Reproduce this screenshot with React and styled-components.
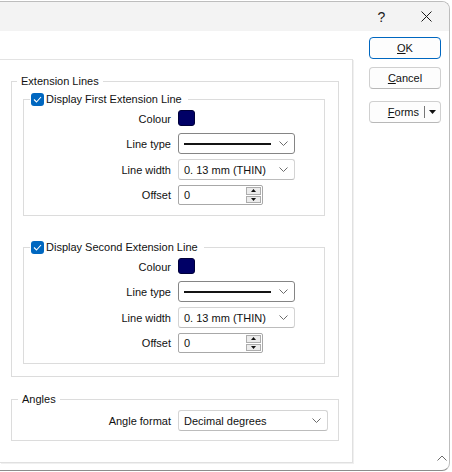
import React from 'react'
import styled, { createGlobalStyle } from 'styled-components'

const GlobalStyle = createGlobalStyle`
  html, body {
    margin: 0;
    padding: 0;
    background: #fff;
  }
  body {
    font-family: "Liberation Sans", Arial, sans-serif;
    font-size: 11px;
    color: #111;
    overflow: hidden;
  }
  * { box-sizing: border-box; }
`

const Window = styled.div`
  width: 450px;
  height: 470px;
  margin-top: 1px;
  border: 1px solid #bdbdbd;
  border-left: none;
  border-bottom-color: #8c8c8c;
  border-radius: 0 8px 8px 0;
  background: #fff;
  display: flex;
  flex-direction: column;
  overflow: hidden;
`

const TitleBar = styled.div`
  height: 29px;
  flex: none;
  background: #f3f3f3;
  display: flex;
  justify-content: flex-end;
`

const CaptionButton = styled.div`
  width: 45px;
  display: flex;
  align-items: center;
  justify-content: center;
  font-size: 14px;
  color: #1a1a1a;
`

const Body = styled.div`
  flex: 1;
  display: flex;
`

const Panel = styled.div`
  width: 353px;
  margin-top: 28px;
  align-self: flex-start;
  padding: 14px 13px 21px 11px;
  border-top: 1px solid #e3e3e3;
  border-right: 1px solid #e0e0e0;
  border-bottom: 1px solid #e0e0e0;
  box-shadow: 1px 1px 0 #f0f0f0;
`

const Group = styled.fieldset`
  margin: ${p => p.$mt || 0}px 0 0 0;
  min-width: 0;
  border: 1px solid #dcdcdc;
  padding: ${p => p.$pad};
`

const Legend = styled.legend`
  margin-left: ${p => p.$ml}px;
  padding: ${p => p.$pad};
  height: 14px;
  line-height: 14px;
  display: flex;
  align-items: center;
  gap: 2px;
`

const Check = styled.span`
  width: 13px;
  height: 13px;
  border-radius: 3px;
  background: #0067c0;
  display: flex;
  align-items: center;
  justify-content: center;
`

const Form = styled.div`
  display: grid;
  grid-template-columns: ${p => p.$label}px auto;
  column-gap: 7px;
  row-gap: 5px;
  align-items: center;
`

const Label = styled.span`
  text-align: right;
  white-space: nowrap;
`

const Swatch = styled.div`
  width: 17px;
  height: 16px;
  margin-bottom: 2px;
  border-radius: 3px;
  background: #000066;
  border: 1px solid #00003a;
`

const Combo = styled.div`
  width: ${p => p.$w}px;
  height: 21px;
  border: 1px solid ${p => p.$border || '#d4d4d4'};
  border-bottom-color: ${p => p.$border || '#bcbcbc'};
  border-radius: 3px;
  background: #fff;
  display: flex;
  align-items: center;
  padding: 0 6px 0 5px;
  gap: 6px;
`

const ComboText = styled.span`
  flex: 1;
  white-space: nowrap;
`

const LineSample = styled.div`
  flex: 1;
  height: 2px;
  background: #141414;
  margin-right: 2px;
`

const Spin = styled.div`
  width: 85px;
  height: 20px;
  border: 1px solid #a8a8a8;
  border-radius: 2px;
  background: #fff;
  display: flex;
  align-items: center;
  padding: 1px 1px 1px 5px;
`

const SpinButtons = styled.div`
  width: 15px;
  height: 16px;
  display: flex;
  flex-direction: column;
  gap: 1px;
`

const SpinCell = styled.div`
  flex: 1;
  background: #ececec;
  border: 1px solid #adadad;
  display: flex;
  align-items: center;
  justify-content: center;
`

const ButtonColumn = styled.div`
  flex: 1;
  padding: 6px 0 0 16px;
  display: flex;
  flex-direction: column;
`

const Button = styled.div`
  width: 72px;
  height: 22px;
  margin-bottom: ${p => p.$mb || 0}px;
  border: 1px solid ${p => (p.$primary ? '#0067c0' : '#d0d0d0')};
  border-bottom-color: ${p => (p.$primary ? '#0067c0' : '#b8b8b8')};
  border-radius: 4px;
  background: #fdfdfd;
  display: flex;
  align-items: center;
  justify-content: center;
`

const SplitMain = styled.span`
  flex: 1;
  text-align: right;
  padding-right: 5px;
`

const SplitDivider = styled.span`
  width: 1px;
  height: 12px;
  background: #777;
`

const SplitArrow = styled.span`
  width: 15px;
  display: flex;
  justify-content: center;
`

const Grip = styled.div`
  margin: auto 2px 9px 0;
  align-self: flex-end;
  display: flex;
`

const Chevron = () => (
  <svg width="9" height="5" viewBox="0 0 9 5">
    <path d="M0.5 0.5 L4.5 4.5 L8.5 0.5" fill="none" stroke="#6b6b6b" strokeWidth="1" />
  </svg>
)

const ColourRow = () => (
  <>
    <Label>Colour</Label>
    <Swatch />
  </>
)

const LineGroup = ({ title, mt }) => (
  <Group $pad="4px 0 10px 0" $mt={mt}>
    <Legend $ml={6} $pad="0 6px 0 1px">
      <Check>
        <svg width="9" height="7" viewBox="0 0 9 7">
          <path d="M1 3.5 L3.5 6 L8 1" fill="none" stroke="#fff" strokeWidth="1.1" />
        </svg>
      </Check>
      {title}
    </Legend>
    <Form $label={147}>
      <ColourRow />
      <Label>Line type</Label>
      <Combo $w={117} $border="#858585">
        <LineSample />
        <Chevron />
      </Combo>
      <Label>Line width</Label>
      <Combo $w={117}>
        <ComboText>0. 13 mm (THIN)</ComboText>
        <Chevron />
      </Combo>
      <Label>Offset</Label>
      <Spin>
        <ComboText>0</ComboText>
        <SpinButtons>
          <SpinCell>
            <svg width="5" height="3" viewBox="0 0 5 3"><path d="M0 3 L2.5 0 L5 3 Z" fill="#111" /></svg>
          </SpinCell>
          <SpinCell>
            <svg width="5" height="3" viewBox="0 0 5 3"><path d="M0 0 L2.5 3 L5 0 Z" fill="#111" /></svg>
          </SpinCell>
        </SpinButtons>
      </Spin>
    </Form>
  </Group>
)

export default function App() {
  return (
    <>
      <GlobalStyle />
      <Window>
        <TitleBar>
          <CaptionButton>?</CaptionButton>
          <CaptionButton>
            <svg width="11" height="11" viewBox="0 0 11 11">
              <path d="M0.5 0.5 L10.5 10.5 M10.5 0.5 L0.5 10.5" stroke="#1a1a1a" strokeWidth="1" />
            </svg>
          </CaptionButton>
        </TitleBar>
        <Body>
          <Panel>
            <Group $pad="4px 13px 12px 11px">
              <Legend $ml={-6} $pad="0 4px">Extension Lines</Legend>
              <LineGroup title="Display First Extension Line" />
              <LineGroup title="Display Second Extension Line" mt={24} />
            </Group>
            <Group $pad="4px 0 9px 0" $mt={15}>
              <Legend $ml={6} $pad="0 4px">Angles</Legend>
              <Form $label={159}>
                <Label>Angle format</Label>
                <Combo $w={150}>
                  <ComboText>Decimal degrees</ComboText>
                  <Chevron />
                </Combo>
              </Form>
            </Group>
          </Panel>
          <ButtonColumn>
            <Button $primary $mb={8}><span><u>O</u>K</span></Button>
            <Button $mb={12}><span><u>C</u>ancel</span></Button>
            <Button>
              <SplitMain><u>F</u>orms</SplitMain>
              <SplitDivider />
              <SplitArrow>
                <svg width="7" height="4" viewBox="0 0 7 4"><path d="M0 0 L3.5 4 L7 0 Z" fill="#111" /></svg>
              </SplitArrow>
            </Button>
            <Grip>
              <svg width="10" height="6" viewBox="0 0 10 6">
                <path d="M0.5 5.5 L5 1 L9.5 5.5" fill="none" stroke="#6b6b6b" strokeWidth="1" />
              </svg>
            </Grip>
          </ButtonColumn>
        </Body>
      </Window>
    </>
  )
}
